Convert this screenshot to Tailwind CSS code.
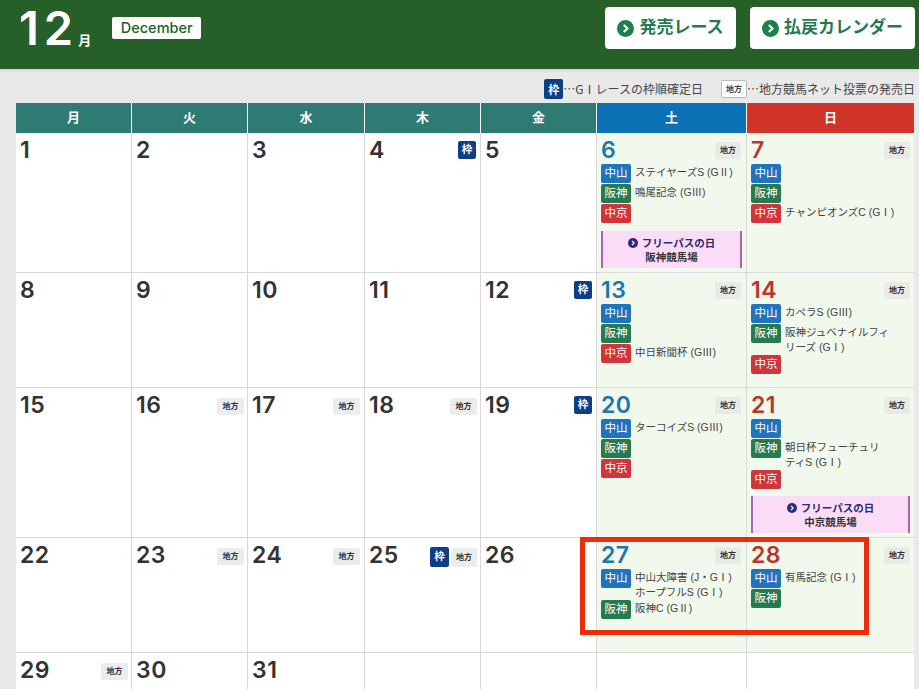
<!DOCTYPE html>
<html lang="ja">
<head>
<meta charset="utf-8">
<script src="https://cdn.jsdelivr.net/npm/@tailwindcss/browser@4"></script>
</head>
<body class="relative w-[919px] h-[689px] overflow-hidden bg-[#e9e9ea] font-['Liberation_Sans','Noto_Sans_CJK_JP',sans-serif] text-[#333]">

<header class="h-[69px] bg-[#265f28] shadow-[0_1px_3px_rgba(0,0,0,0.15)] flex items-start pl-[19px] pr-[4px]">
  <div class="flex items-baseline text-white mt-[2px] font-['Inter','Noto_Sans_CJK_JP',sans-serif] font-semibold">
    <span class="text-[47px] leading-[52px] tracking-[5px]">12</span>
    <span class="text-[13px] font-bold">月</span>
  </div>
  <span class="ml-[21px] mt-[17px] h-[22px] w-[89px] rounded-[2px] bg-white text-[#265f28] text-[14.5px] font-medium font-['Inter',sans-serif] flex items-center justify-center">December</span>
  <div class="ml-auto flex gap-[14px] mt-[7px]">
    <div class="h-[42px] w-[131px] bg-white rounded-[4px] flex items-center justify-center gap-[5px] text-[#257a4f] text-[17px] font-bold">
      <svg class="w-[17px] h-[17px]" viewBox="0 0 16 16"><circle cx="8" cy="8" r="8" fill="#1f7f4a"/><path d="M6.4 4.6 9.8 8l-3.4 3.4" fill="none" stroke="#fff" stroke-width="2"/></svg>
      <span>発売レース</span>
    </div>
    <div class="h-[42px] w-[165px] bg-white rounded-[4px] flex items-center justify-center gap-[5px] text-[#257a4f] text-[17px] font-bold">
      <svg class="w-[17px] h-[17px]" viewBox="0 0 16 16"><circle cx="8" cy="8" r="8" fill="#1f7f4a"/><path d="M6.4 4.6 9.8 8l-3.4 3.4" fill="none" stroke="#fff" stroke-width="2"/></svg>
      <span>払戻カレンダー</span>
    </div>
  </div>
</header>

<div class="h-[34px] flex items-center justify-end pr-[4px] text-[12px] text-[#444] pt-[6px] font-['Noto_Sans_CJK_JP',sans-serif]">
  <span class="w-[19px] h-[20px] rounded-[2px] bg-[#0c3f85] text-white text-[11px] font-bold flex items-center justify-center">枠</span>
  <span>…GⅠレースの枠順確定日</span>
  <span class="ml-[18px] w-[26px] h-[18px] rounded-[2px] bg-white border border-[#bbb] text-[8px] font-bold flex items-center justify-center">地方</span>
  <span>…地方競馬ネット投票の発売日</span>
</div>

<main class="ml-[16px] w-[898px] grid grid-cols-[116px_116px_117px_116px_116px_150px_167px] grid-rows-[30px_140px_115px_150px_115px_36px] bg-white">
  <div class="bg-[#2d7b73] border-r border-white text-white text-[13px] font-bold flex items-center justify-center">月</div>
  <div class="bg-[#2d7b73] border-r border-white text-white text-[13px] font-bold flex items-center justify-center">火</div>
  <div class="bg-[#2d7b73] border-r border-white text-white text-[13px] font-bold flex items-center justify-center">水</div>
  <div class="bg-[#2d7b73] border-r border-white text-white text-[13px] font-bold flex items-center justify-center">木</div>
  <div class="bg-[#2d7b73] border-r border-white text-white text-[13px] font-bold flex items-center justify-center">金</div>
  <div class="bg-[#0a72b5] border-r border-white text-white text-[13px] font-bold flex items-center justify-center">土</div>
  <div class="bg-[#d13428] text-white text-[13px] font-bold flex items-center justify-center">日</div>

  <!-- row 1 -->
  <div class="border-r border-b border-[#d9d9d9] pl-[4px] pr-[5px] pt-[3px]"><div class="text-[23px] leading-[28px] tracking-[0.5px] font-semibold font-['Inter',sans-serif]">1</div></div>
  <div class="border-r border-b border-[#d9d9d9] pl-[4px] pr-[5px] pt-[3px]"><div class="text-[23px] leading-[28px] tracking-[0.5px] font-semibold font-['Inter',sans-serif]">2</div></div>
  <div class="border-r border-b border-[#d9d9d9] pl-[4px] pr-[5px] pt-[3px]"><div class="text-[23px] leading-[28px] tracking-[0.5px] font-semibold font-['Inter',sans-serif]">3</div></div>
  <div class="border-r border-b border-[#d9d9d9] pl-[4px] pr-[5px] pt-[3px] flex justify-between items-start"><div class="text-[23px] leading-[28px] tracking-[0.5px] font-semibold font-['Inter',sans-serif]">4</div><span class="mt-[5px] mr-[-1px] w-[18px] h-[18px] rounded-[2px] bg-[#0c3f85] text-white text-[10.5px] font-bold flex items-center justify-center">枠</span></div>
  <div class="border-r border-b border-[#d9d9d9] pl-[4px] pr-[5px] pt-[3px]"><div class="text-[23px] leading-[28px] tracking-[0.5px] font-semibold font-['Inter',sans-serif]">5</div></div>
  <div class="bg-[#f1f8ec] border-r border-b border-[#d9d9d9] px-[4px] pt-[3px]">
    <div class="flex justify-between items-start"><div class="text-[23px] leading-[28px] tracking-[0.5px] font-semibold text-[#1a76ae] font-['Inter',sans-serif]">6</div><span class="mt-[6px] mr-[1px] w-[26px] h-[17px] rounded-[2px] bg-[#e9e9e6] text-[8px] font-bold flex items-center justify-center">地方</span></div>
    <div class="flex flex-col gap-[1px] text-[10.5px] leading-[14.5px] text-[#444]">
      <div class="flex gap-[4px]"><span class="shrink-0 w-[30px] h-[19px] rounded-[2px] bg-[#1f75bd] text-white text-[11.5px] flex items-center justify-center">中山</span><span class="pt-[1px]">ステイヤーズS (GⅡ)</span></div>
      <div class="flex gap-[4px]"><span class="shrink-0 w-[30px] h-[19px] rounded-[2px] bg-[#257a4f] text-white text-[11.5px] flex items-center justify-center">阪神</span><span class="pt-[1px]">鳴尾記念 (GⅢ)</span></div>
      <div class="flex gap-[4px]"><span class="shrink-0 w-[30px] h-[19px] rounded-[2px] bg-[#d0343c] text-white text-[11.5px] flex items-center justify-center">中京</span></div>
    </div>
    <div class="mt-[8px] h-[37px] bg-[#fbdcf7] border-x-2 border-[#a964b8] flex flex-col items-center justify-center text-[10.5px] leading-[14px] font-bold">
      <div class="flex items-center gap-[4px] text-[#2d2a6e]"><svg class="w-[10px] h-[10px]" viewBox="0 0 16 16"><circle cx="8" cy="8" r="8" fill="#2d2a7e"/><path d="M6.4 4.6 9.8 8l-3.4 3.4" fill="none" stroke="#fff" stroke-width="2"/></svg><span>フリーパスの日</span></div>
      <div class="text-[#333]">阪神競馬場</div>
    </div>
  </div>
  <div class="bg-[#f1f8ec] border-b border-[#d9d9d9] px-[4px] pt-[3px]">
    <div class="flex justify-between items-start"><div class="text-[23px] leading-[28px] tracking-[0.5px] font-semibold text-[#bb352e] font-['Inter',sans-serif]">7</div><span class="mt-[6px] w-[26px] h-[17px] rounded-[2px] bg-[#e9e9e6] text-[8px] font-bold flex items-center justify-center">地方</span></div>
    <div class="flex flex-col gap-[1px] text-[10.5px] leading-[14.5px] text-[#444]">
      <div class="flex gap-[4px]"><span class="shrink-0 w-[30px] h-[19px] rounded-[2px] bg-[#1f75bd] text-white text-[11.5px] flex items-center justify-center">中山</span></div>
      <div class="flex gap-[4px]"><span class="shrink-0 w-[30px] h-[19px] rounded-[2px] bg-[#257a4f] text-white text-[11.5px] flex items-center justify-center">阪神</span></div>
      <div class="flex gap-[4px]"><span class="shrink-0 w-[30px] h-[19px] rounded-[2px] bg-[#d0343c] text-white text-[11.5px] flex items-center justify-center">中京</span><span class="pt-[1px]">チャンピオンズC (GⅠ)</span></div>
    </div>
  </div>

  <!-- row 2 -->
  <div class="border-r border-b border-[#d9d9d9] pl-[4px] pr-[5px] pt-[3px]"><div class="text-[23px] leading-[28px] tracking-[0.5px] font-semibold font-['Inter',sans-serif]">8</div></div>
  <div class="border-r border-b border-[#d9d9d9] pl-[4px] pr-[5px] pt-[3px]"><div class="text-[23px] leading-[28px] tracking-[0.5px] font-semibold font-['Inter',sans-serif]">9</div></div>
  <div class="border-r border-b border-[#d9d9d9] pl-[4px] pr-[5px] pt-[3px]"><div class="text-[23px] leading-[28px] tracking-[0.5px] font-semibold font-['Inter',sans-serif]">10</div></div>
  <div class="border-r border-b border-[#d9d9d9] pl-[4px] pr-[5px] pt-[3px]"><div class="text-[23px] leading-[28px] tracking-[0.5px] font-semibold font-['Inter',sans-serif]">11</div></div>
  <div class="border-r border-b border-[#d9d9d9] pl-[4px] pr-[5px] pt-[3px] flex justify-between items-start"><div class="text-[23px] leading-[28px] tracking-[0.5px] font-semibold font-['Inter',sans-serif]">12</div><span class="mt-[5px] mr-[-1px] w-[18px] h-[18px] rounded-[2px] bg-[#0c3f85] text-white text-[10.5px] font-bold flex items-center justify-center">枠</span></div>
  <div class="bg-[#f1f8ec] border-r border-b border-[#d9d9d9] px-[4px] pt-[3px]">
    <div class="flex justify-between items-start"><div class="text-[23px] leading-[28px] tracking-[0.5px] font-semibold text-[#1a76ae] font-['Inter',sans-serif]">13</div><span class="mt-[6px] mr-[1px] w-[26px] h-[17px] rounded-[2px] bg-[#e9e9e6] text-[8px] font-bold flex items-center justify-center">地方</span></div>
    <div class="flex flex-col gap-[1px] text-[10.5px] leading-[14.5px] text-[#444]">
      <div class="flex gap-[4px]"><span class="shrink-0 w-[30px] h-[19px] rounded-[2px] bg-[#1f75bd] text-white text-[11.5px] flex items-center justify-center">中山</span></div>
      <div class="flex gap-[4px]"><span class="shrink-0 w-[30px] h-[19px] rounded-[2px] bg-[#257a4f] text-white text-[11.5px] flex items-center justify-center">阪神</span></div>
      <div class="flex gap-[4px]"><span class="shrink-0 w-[30px] h-[19px] rounded-[2px] bg-[#d0343c] text-white text-[11.5px] flex items-center justify-center">中京</span><span class="pt-[1px]">中日新聞杯 (GⅢ)</span></div>
    </div>
  </div>
  <div class="bg-[#f1f8ec] border-b border-[#d9d9d9] px-[4px] pt-[3px]">
    <div class="flex justify-between items-start"><div class="text-[23px] leading-[28px] tracking-[0.5px] font-semibold text-[#bb352e] font-['Inter',sans-serif]">14</div><span class="mt-[6px] w-[26px] h-[17px] rounded-[2px] bg-[#e9e9e6] text-[8px] font-bold flex items-center justify-center">地方</span></div>
    <div class="flex flex-col gap-[1px] text-[10.5px] leading-[14.5px] text-[#444]">
      <div class="flex gap-[4px]"><span class="shrink-0 w-[30px] h-[19px] rounded-[2px] bg-[#1f75bd] text-white text-[11.5px] flex items-center justify-center">中山</span><span class="pt-[1px]">カペラS (GⅢ)</span></div>
      <div class="flex gap-[4px]"><span class="shrink-0 w-[30px] h-[19px] rounded-[2px] bg-[#257a4f] text-white text-[11.5px] flex items-center justify-center">阪神</span><span class="pt-[1px] w-[110px]">阪神ジュベナイルフィリーズ (GⅠ)</span></div>
      <div class="flex gap-[4px]"><span class="shrink-0 w-[30px] h-[19px] rounded-[2px] bg-[#d0343c] text-white text-[11.5px] flex items-center justify-center">中京</span></div>
    </div>
  </div>

  <!-- row 3 -->
  <div class="border-r border-b border-[#d9d9d9] pl-[4px] pr-[5px] pt-[3px]"><div class="text-[23px] leading-[28px] tracking-[0.5px] font-semibold font-['Inter',sans-serif]">15</div></div>
  <div class="border-r border-b border-[#d9d9d9] pl-[4px] pr-[5px] pt-[3px] flex justify-between items-start"><div class="text-[23px] leading-[28px] tracking-[0.5px] font-semibold font-['Inter',sans-serif]">16</div><span class="mt-[7px] mr-[-2px] w-[27px] h-[17px] rounded-[2px] bg-[#ececec] text-[8px] font-bold flex items-center justify-center">地方</span></div>
  <div class="border-r border-b border-[#d9d9d9] pl-[4px] pr-[5px] pt-[3px] flex justify-between items-start"><div class="text-[23px] leading-[28px] tracking-[0.5px] font-semibold font-['Inter',sans-serif]">17</div><span class="mt-[7px] mr-[-1px] w-[27px] h-[17px] rounded-[2px] bg-[#ececec] text-[8px] font-bold flex items-center justify-center">地方</span></div>
  <div class="border-r border-b border-[#d9d9d9] pl-[4px] pr-[5px] pt-[3px] flex justify-between items-start"><div class="text-[23px] leading-[28px] tracking-[0.5px] font-semibold font-['Inter',sans-serif]">18</div><span class="mt-[7px] mr-[-2px] w-[27px] h-[17px] rounded-[2px] bg-[#ececec] text-[8px] font-bold flex items-center justify-center">地方</span></div>
  <div class="border-r border-b border-[#d9d9d9] pl-[4px] pr-[5px] pt-[3px] flex justify-between items-start"><div class="text-[23px] leading-[28px] tracking-[0.5px] font-semibold font-['Inter',sans-serif]">19</div><span class="mt-[5px] mr-[-1px] w-[18px] h-[18px] rounded-[2px] bg-[#0c3f85] text-white text-[10.5px] font-bold flex items-center justify-center">枠</span></div>
  <div class="bg-[#f1f8ec] border-r border-b border-[#d9d9d9] px-[4px] pt-[3px]">
    <div class="flex justify-between items-start"><div class="text-[23px] leading-[28px] tracking-[0.5px] font-semibold text-[#1a76ae] font-['Inter',sans-serif]">20</div><span class="mt-[6px] mr-[1px] w-[26px] h-[17px] rounded-[2px] bg-[#e9e9e6] text-[8px] font-bold flex items-center justify-center">地方</span></div>
    <div class="flex flex-col gap-[1px] text-[10.5px] leading-[14.5px] text-[#444]">
      <div class="flex gap-[4px]"><span class="shrink-0 w-[30px] h-[19px] rounded-[2px] bg-[#1f75bd] text-white text-[11.5px] flex items-center justify-center">中山</span><span class="pt-[1px]">ターコイズS (GⅢ)</span></div>
      <div class="flex gap-[4px]"><span class="shrink-0 w-[30px] h-[19px] rounded-[2px] bg-[#257a4f] text-white text-[11.5px] flex items-center justify-center">阪神</span></div>
      <div class="flex gap-[4px]"><span class="shrink-0 w-[30px] h-[19px] rounded-[2px] bg-[#d0343c] text-white text-[11.5px] flex items-center justify-center">中京</span></div>
    </div>
  </div>
  <div class="bg-[#f1f8ec] border-b border-[#d9d9d9] px-[4px] pt-[3px]">
    <div class="flex justify-between items-start"><div class="text-[23px] leading-[28px] tracking-[0.5px] font-semibold text-[#bb352e] font-['Inter',sans-serif]">21</div><span class="mt-[6px] w-[26px] h-[17px] rounded-[2px] bg-[#e9e9e6] text-[8px] font-bold flex items-center justify-center">地方</span></div>
    <div class="flex flex-col gap-[1px] text-[10.5px] leading-[14.5px] text-[#444]">
      <div class="flex gap-[4px]"><span class="shrink-0 w-[30px] h-[19px] rounded-[2px] bg-[#1f75bd] text-white text-[11.5px] flex items-center justify-center">中山</span></div>
      <div class="flex gap-[4px]"><span class="shrink-0 w-[30px] h-[19px] rounded-[2px] bg-[#257a4f] text-white text-[11.5px] flex items-center justify-center">阪神</span><span class="pt-[1px] w-[100px]">朝日杯フューチュリティS (GⅠ)</span></div>
      <div class="flex gap-[4px]"><span class="shrink-0 w-[30px] h-[19px] rounded-[2px] bg-[#d0343c] text-white text-[11.5px] flex items-center justify-center">中京</span></div>
    </div>
    <div class="mt-[7px] h-[37px] bg-[#fbdcf7] border-x-2 border-[#a964b8] flex flex-col items-center justify-center text-[10.5px] leading-[14px] font-bold">
      <div class="flex items-center gap-[4px] text-[#2d2a6e]"><svg class="w-[10px] h-[10px]" viewBox="0 0 16 16"><circle cx="8" cy="8" r="8" fill="#2d2a7e"/><path d="M6.4 4.6 9.8 8l-3.4 3.4" fill="none" stroke="#fff" stroke-width="2"/></svg><span>フリーパスの日</span></div>
      <div class="text-[#333]">中京競馬場</div>
    </div>
  </div>

  <!-- row 4 -->
  <div class="border-r border-b border-[#d9d9d9] pl-[4px] pr-[5px] pt-[3px]"><div class="text-[23px] leading-[28px] tracking-[0.5px] font-semibold font-['Inter',sans-serif]">22</div></div>
  <div class="border-r border-b border-[#d9d9d9] pl-[4px] pr-[5px] pt-[3px] flex justify-between items-start"><div class="text-[23px] leading-[28px] tracking-[0.5px] font-semibold font-['Inter',sans-serif]">23</div><span class="mt-[7px] mr-[-2px] w-[27px] h-[17px] rounded-[2px] bg-[#ececec] text-[8px] font-bold flex items-center justify-center">地方</span></div>
  <div class="border-r border-b border-[#d9d9d9] pl-[4px] pr-[5px] pt-[3px] flex justify-between items-start"><div class="text-[23px] leading-[28px] tracking-[0.5px] font-semibold font-['Inter',sans-serif]">24</div><span class="mt-[7px] mr-[-1px] w-[27px] h-[17px] rounded-[2px] bg-[#ececec] text-[8px] font-bold flex items-center justify-center">地方</span></div>
  <div class="border-r border-b border-[#d9d9d9] pl-[4px] pr-[5px] pt-[3px] flex justify-between items-start"><div class="text-[23px] leading-[28px] tracking-[0.5px] font-semibold font-['Inter',sans-serif]">25</div><div class="flex gap-[2px] mr-[-2px] items-start"><span class="mt-[6px] w-[19px] h-[20px] rounded-[2px] bg-[#0c3f85] text-white text-[10.5px] font-bold flex items-center justify-center">枠</span><span class="mt-[7px] w-[26px] h-[19px] rounded-[2px] bg-[#ececec] text-[8px] font-bold flex items-center justify-center">地方</span></div></div>
  <div class="border-r border-b border-[#d9d9d9] pl-[4px] pr-[5px] pt-[3px]"><div class="text-[23px] leading-[28px] tracking-[0.5px] font-semibold font-['Inter',sans-serif]">26</div></div>
  <div class="bg-[#f1f8ec] border-r border-b border-[#d9d9d9] px-[4px] pt-[3px]">
    <div class="flex justify-between items-start"><div class="text-[23px] leading-[28px] tracking-[0.5px] font-semibold text-[#1a76ae] font-['Inter',sans-serif]">27</div><span class="mt-[6px] mr-[1px] w-[26px] h-[17px] rounded-[2px] bg-[#e9e9e6] text-[8px] font-bold flex items-center justify-center">地方</span></div>
    <div class="flex flex-col gap-[1px] text-[10.5px] leading-[14.5px] text-[#444]">
      <div class="flex gap-[4px]"><span class="shrink-0 w-[30px] h-[19px] rounded-[2px] bg-[#1f75bd] text-white text-[11.5px] flex items-center justify-center">中山</span><span class="pt-[1px]">中山大障害 (J・GⅠ)<br>ホープフルS (GⅠ)</span></div>
      <div class="flex gap-[4px]"><span class="shrink-0 w-[30px] h-[19px] rounded-[2px] bg-[#257a4f] text-white text-[11.5px] flex items-center justify-center">阪神</span><span class="pt-[1px]">阪神C (GⅡ)</span></div>
    </div>
  </div>
  <div class="bg-[#f1f8ec] border-b border-[#d9d9d9] px-[4px] pt-[3px]">
    <div class="flex justify-between items-start"><div class="text-[23px] leading-[28px] tracking-[0.5px] font-semibold text-[#bb352e] font-['Inter',sans-serif]">28</div><span class="mt-[6px] w-[26px] h-[17px] rounded-[2px] bg-[#e9e9e6] text-[8px] font-bold flex items-center justify-center">地方</span></div>
    <div class="flex flex-col gap-[1px] text-[10.5px] leading-[14.5px] text-[#444]">
      <div class="flex gap-[4px]"><span class="shrink-0 w-[30px] h-[19px] rounded-[2px] bg-[#1f75bd] text-white text-[11.5px] flex items-center justify-center">中山</span><span class="pt-[1px]">有馬記念 (GⅠ)</span></div>
      <div class="flex gap-[4px]"><span class="shrink-0 w-[30px] h-[19px] rounded-[2px] bg-[#257a4f] text-white text-[11.5px] flex items-center justify-center">阪神</span></div>
    </div>
  </div>

  <!-- row 5 -->
  <div class="border-r border-[#d9d9d9] pl-[4px] pr-[5px] pt-[3px] flex justify-between items-start"><div class="text-[23px] leading-[28px] tracking-[0.5px] font-semibold font-['Inter',sans-serif]">29</div><span class="mt-[7px] mr-[-2px] w-[27px] h-[17px] rounded-[2px] bg-[#ececec] text-[8px] font-bold flex items-center justify-center">地方</span></div>
  <div class="border-r border-[#d9d9d9] pl-[4px] pr-[5px] pt-[3px]"><div class="text-[23px] leading-[28px] tracking-[0.5px] font-semibold font-['Inter',sans-serif]">30</div></div>
  <div class="border-r border-[#d9d9d9] pl-[4px] pr-[5px] pt-[3px]"><div class="text-[23px] leading-[28px] tracking-[0.5px] font-semibold font-['Inter',sans-serif]">31</div></div>
  <div class="border-r border-[#d9d9d9]"></div>
  <div class="border-r border-[#d9d9d9]"></div>
  <div class="border-r border-[#d9d9d9]"></div>
  <div></div>
</main>

<div class="absolute left-[580px] top-[537px] w-[289px] h-[98px] border-[5px] border-[#ee2c0c]"></div>
</body>
</html>
